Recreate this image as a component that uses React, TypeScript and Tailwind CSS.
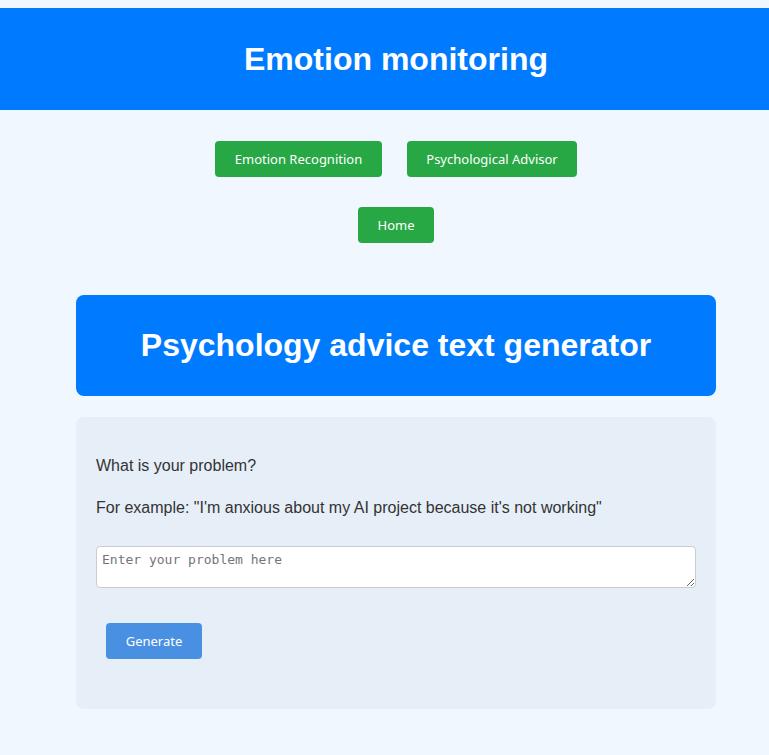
export default function App() {
  return (
    <div className="min-h-[755px] overflow-hidden bg-[#f0f7ff]">
      <div className="w-[792px] pt-2 pb-[46px] font-['Liberation_Sans',Arial,sans-serif] text-[#333]">
        <header className="flex h-[102px] items-center justify-center bg-[#007bff]">
          <h1 className="text-[32px] font-bold text-white">Emotion monitoring</h1>
        </header>

        <nav className="mt-[31px] flex flex-col items-center gap-[30px] font-['Noto_Sans',sans-serif] text-[13px] text-white">
          <div className="flex gap-[25px]">
            <button className="h-9 w-[167px] rounded bg-[#28a745] pt-px">Emotion Recognition</button>
            <button className="h-9 w-[170px] rounded bg-[#28a745] pt-px">Psychological Advisor</button>
          </div>
          <button className="h-9 w-[76px] rounded bg-[#28a745] pt-px">Home</button>
        </nav>

        <main className="mx-auto mt-[52px] w-[640px]">
          <div className="flex h-[101px] items-center justify-center rounded-lg bg-[#007bff] pb-[2px]">
            <h2 className="text-[32px] font-bold text-white">Psychology advice text generator</h2>
          </div>

          <section className="mt-[21px] rounded-lg bg-[#e6eef7] px-5 pb-[50px] pt-10 text-base">
            <p className="leading-[18px]">What is your problem?</p>
            <p className="mt-6 leading-[18px]">
              For example: "I'm anxious about my AI project because it's not working"
            </p>
            <textarea
              className="mt-[29px] block h-[42px] w-full rounded border border-[#ccc] bg-white px-[5px] py-[3px] font-['DejaVu_Sans_Mono',monospace] text-[13px] outline-none placeholder:text-[#757575]"
              placeholder="Enter your problem here"
            />
            <button className="ml-[10px] mt-[35px] h-9 w-[96px] rounded bg-[#4a90e2] pt-px font-['Noto_Sans',sans-serif] text-[13px] text-white">
              Generate
            </button>
          </section>
        </main>
      </div>
    </div>
  );
}
